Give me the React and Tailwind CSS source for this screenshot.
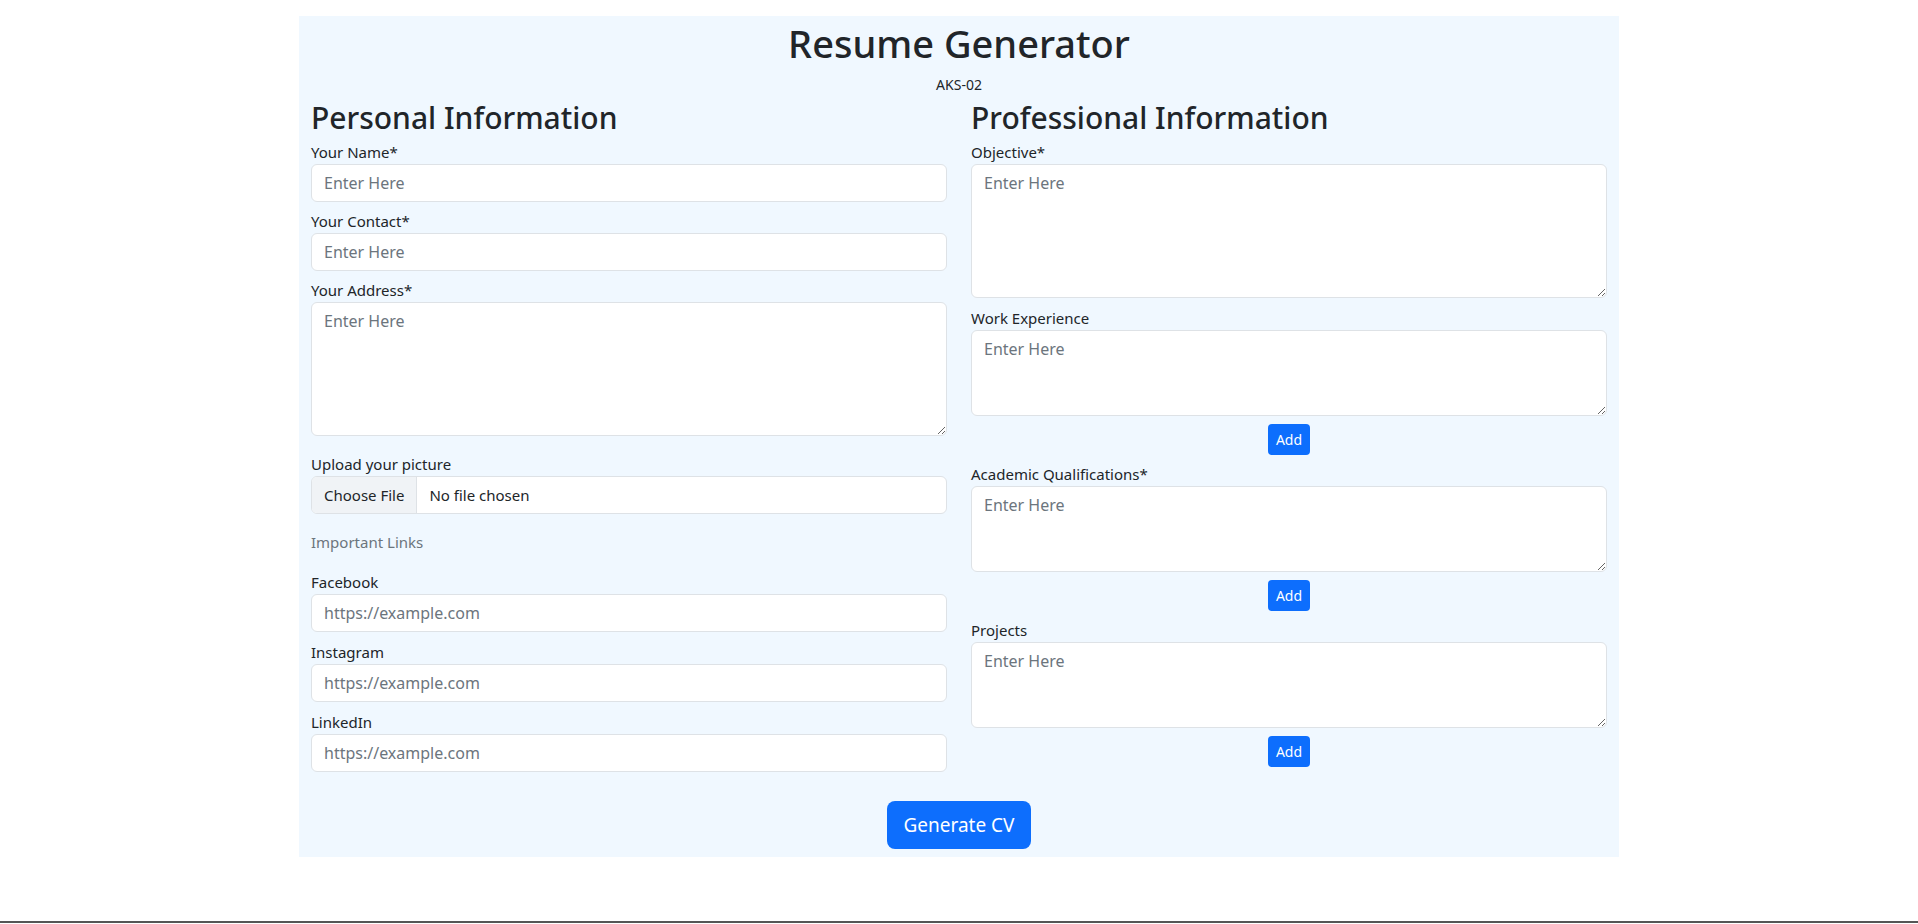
export default function App() {
  const inp = "block w-full h-[38px] rounded-[6px] border border-[#dee2e6] bg-white px-3 text-[16px] text-[#212529] placeholder:text-[#6c757d] outline-none";
  const ta = "block w-full rounded-[6px] border border-[#dee2e6] bg-white px-3 py-[6px] text-[16px] text-[#212529] placeholder:text-[#6c757d] outline-none resize-y";
  const lab = "block text-[15px] leading-6 text-[#212529]";
  const add = <div className="flex justify-center mt-2"><button className="h-[31px] px-2 rounded-[4px] bg-[#0d6efd] text-white text-[14px]">Add</button></div>;
  return (
    <div className="relative min-h-[924px] bg-white text-[#212529]" style={{ fontFamily: '"Noto Sans", "Open Sans", sans-serif' }}>
      <div className="mx-auto w-[1320px] pt-[16px]">
        <div className="bg-[#f0f8ff] pb-[8px]">
          <h1 className="text-center text-[38px] font-medium leading-[54px]">Resume Generator</h1>
          <p className="text-center text-[14px] leading-6 mt-[3px]">AKS-02</p>
          <div className="flex mt-[1px]">
            <div className="w-1/2 px-3">
              <h2 className="text-[30px] font-medium leading-[40px] mb-[2px]">Personal Information</h2>
              <label className={lab}>Your Name*</label>
              <input className={inp} placeholder="Enter Here" />
              <label className={lab + " mt-[7px]"}>Your Contact*</label>
              <input className={inp} placeholder="Enter Here" />
              <label className={lab + " mt-[7px]"}>Your Address*</label>
              <textarea className={ta + " h-[134px]"} placeholder="Enter Here" />
              <label className={lab + " mt-[16px]"}>Upload your picture</label>
              <div className="flex h-[38px] rounded-[6px] border border-[#dee2e6] bg-white overflow-hidden text-[15px]">
                <span className="flex items-center px-3 bg-[#f0f3f6] border-r border-[#dee2e6]">Choose File</span>
                <span className="flex items-center px-3">No file chosen</span>
              </div>
              <p className="text-[15px] leading-6 text-[#6c757d] mt-[16px]">Important Links</p>
              <label className={lab + " mt-[16px]"}>Facebook</label>
              <input className={inp} placeholder="https://example.com" />
              <label className={lab + " mt-[8px]"}>Instagram</label>
              <input className={inp} placeholder="https://example.com" />
              <label className={lab + " mt-[8px]"}>LinkedIn</label>
              <input className={inp} placeholder="https://example.com" />
            </div>
            <div className="w-1/2 px-3">
              <h2 className="text-[30px] font-medium leading-[40px] mb-[2px]">Professional Information</h2>
              <label className={lab}>Objective*</label>
              <textarea className={ta + " h-[134px]"} placeholder="Enter Here" />
              <label className={lab + " mt-[8px]"}>Work Experience</label>
              <textarea className={ta + " h-[86px]"} placeholder="Enter Here" />
              {add}
              <label className={lab + " mt-[7px]"}>Academic Qualifications*</label>
              <textarea className={ta + " h-[86px]"} placeholder="Enter Here" />
              {add}
              <label className={lab + " mt-[7px]"}>Projects</label>
              <textarea className={ta + " h-[86px]"} placeholder="Enter Here" />
              {add}
            </div>
          </div>
          <div className="flex justify-center mt-[29px]">
            <button className="h-[48px] px-4 rounded-[8px] bg-[#0d6efd] text-white text-[19px]">Generate CV</button>
          </div>
        </div>
      </div>
      <div className="absolute left-0 right-0 top-[921px] h-[2px] bg-[#555]" />
    </div>
  );
}
